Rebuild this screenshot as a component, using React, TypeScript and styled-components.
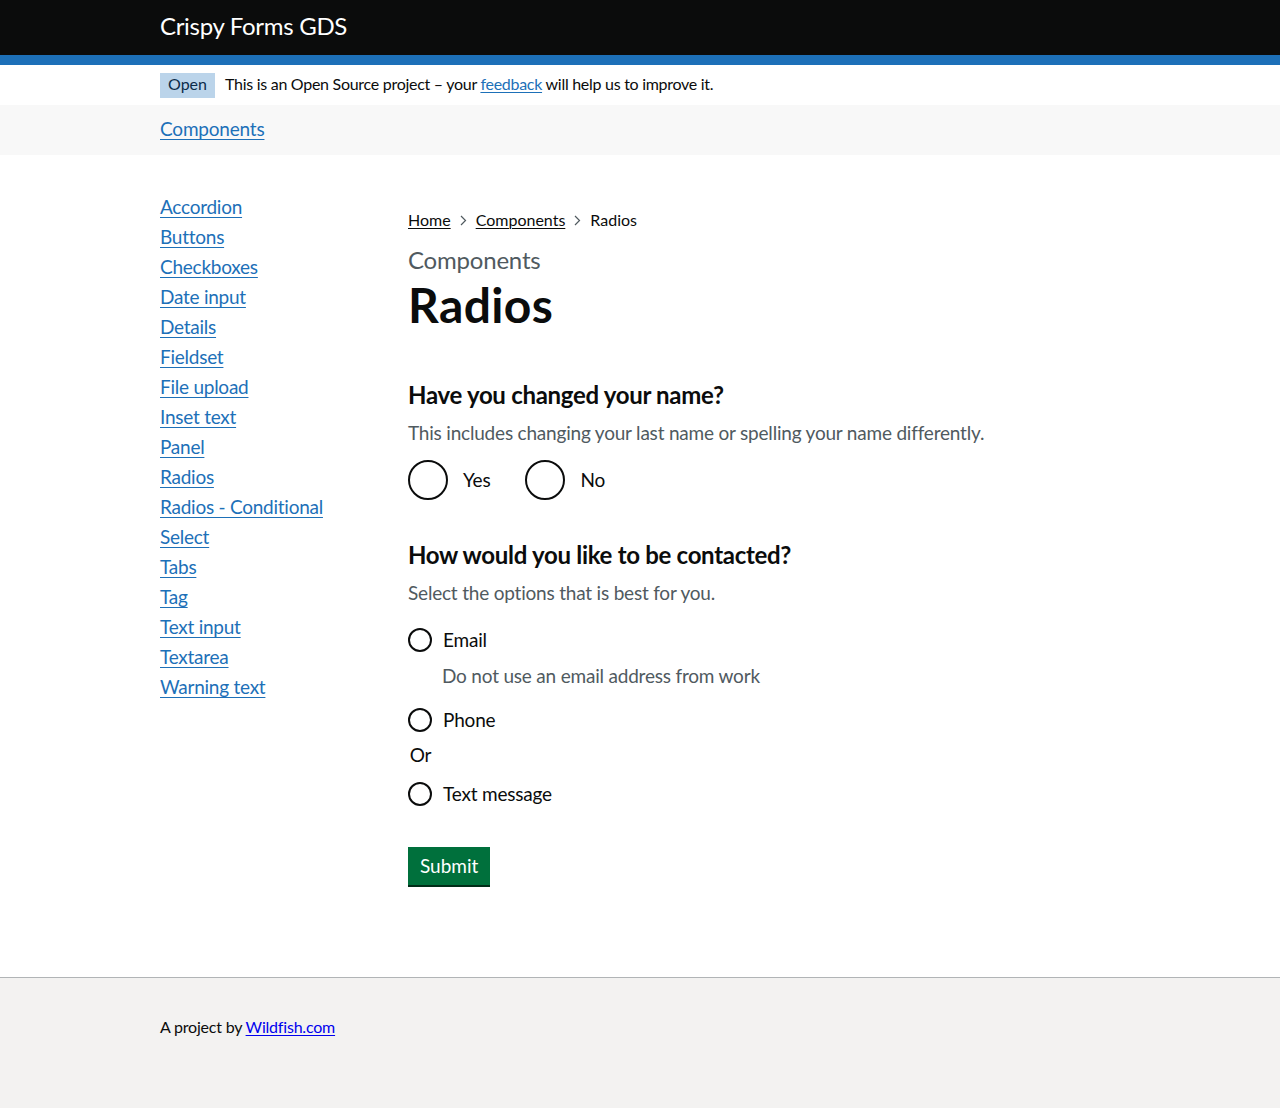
import React from "react";
import styled, { createGlobalStyle } from "styled-components";

const FONT = `Lato, "Liberation Sans", Arial, sans-serif`;

const GlobalStyle = createGlobalStyle`
  html, body { margin: 0; padding: 0; background: #ffffff; }
  body {
    font-family: ${FONT};
    color: #0b0c0c;
    letter-spacing: -0.2px;
    -webkit-font-smoothing: antialiased;
  }
  * { box-sizing: border-box; }
`;

const Page = styled.div`
  display: flex;
  flex-direction: column;
  min-height: 1108px;
`;

const Container = styled.div`
  width: 960px;
  margin: 0 auto;
`;

const Header = styled.header`
  background: #0b0c0c;
  border-bottom: 10px solid #1d70b8;
`;

const HeaderInner = styled(Container)`
  height: 55px;
  display: flex;
  align-items: center;
`;

const ServiceName = styled.span`
  color: #ffffff;
  font-size: 24px;
  line-height: 30px;
  letter-spacing: -0.3px;
  padding-bottom: 3px;
`;

const PhaseBanner = styled.div`
  padding: 8px 0 7px;
`;

const PhaseInner = styled(Container)`
  display: flex;
  align-items: center;
  font-size: 16px;
  line-height: 20px;
  letter-spacing: -0.28px;
`;

const PhaseText = styled.span`
  padding-bottom: 3px;
`;

const Tag = styled.strong`
  display: inline-block;
  background: #bbd4ea;
  color: #0c2d4a;
  font-weight: 400;
  font-size: 16px;
  line-height: 20px;
  letter-spacing: 0;
  padding: 1px 8px 4px;
  margin-right: 10px;
`;

const Link = styled.a<{ $black?: boolean; $visited?: boolean }>`
  color: ${(p) => (p.$black ? "#0b0c0c" : p.$visited ? "#0000ee" : "#1d70b8")};
  text-decoration: underline;
  text-decoration-thickness: 1px;
  text-underline-offset: 0.15em;
`;

const NavBar = styled.nav`
  background: #f8f8f8;
  height: 50px;
`;

const NavInner = styled(Container)`
  height: 50px;
  display: flex;
  align-items: center;
  font-size: 19px;
  line-height: 25px;
  padding-bottom: 3px;
`;

const Main = styled(Container)`
  display: grid;
  grid-template-columns: 248px 1fr;
  padding-top: 39px;
  padding-bottom: 90px;
  flex: 1;
`;

const SideList = styled.ul`
  list-style: none;
  margin: 0;
  padding: 0;
  font-size: 19px;
  line-height: 25px;
  letter-spacing: -0.25px;
`;

const SideItem = styled.li`
  margin-bottom: 5px;
`;

const Content = styled.div`
  padding-top: 16px;
`;

const Breadcrumbs = styled.ol`
  list-style: none;
  margin: 0 0 15px;
  padding: 0;
  display: flex;
  align-items: center;
  font-size: 16px;
  line-height: 20px;
  letter-spacing: 0;
`;

const Crumb = styled.li`
  display: flex;
  align-items: center;
`;

const Chevron = styled.svg`
  width: 7px;
  height: 11px;
  margin: 1px 9px 0 9px;
  flex: none;
`;

const Caption = styled.span`
  display: block;
  color: #505a5f;
  font-size: 24px;
  line-height: 30px;
  margin-bottom: 5px;
`;

const H1 = styled.h1`
  margin: 0 0 50px;
  font-size: 48px;
  line-height: 50px;
  font-weight: 700;
  letter-spacing: 0.4px;
`;

const Fieldset = styled.fieldset<{ $gap: number }>`
  border: 0;
  margin: 0 0 ${(p) => p.$gap}px;
  padding: 0;
  min-width: 0;
`;

const Legend = styled.legend`
  padding: 0;
  margin: 0 0 10px;
  font-size: 24px;
  line-height: 30px;
  font-weight: 700;
  letter-spacing: -0.3px;
`;

const Hint = styled.div`
  color: #505a5f;
  font-size: 19px;
  line-height: 25px;
  margin-bottom: 15px;
`;

const InlineRadios = styled.div`
  display: flex;
  align-items: flex-start;
`;

const RadioItem = styled.label<{ $inline?: boolean }>`
  display: flex;
  align-items: flex-start;
  min-height: 40px;
  margin-right: ${(p) => (p.$inline ? "20px" : "0")};
  cursor: pointer;
`;

const Circle = styled.span<{ $small?: boolean }>`
  flex: none;
  width: ${(p) => (p.$small ? 24 : 40)}px;
  height: ${(p) => (p.$small ? 24 : 40)}px;
  margin: ${(p) => (p.$small ? "8px 10px 0 0" : "0 15px 0 0")};
  border: 2px solid #0b0c0c;
  border-radius: 50%;
  background: #ffffff;
`;

const RadioLabel = styled.span<{ $small?: boolean }>`
  font-size: 19px;
  line-height: 25px;
  padding: 7px 15px 6px 0;
  padding-left: ${(p) => (p.$small ? "1px" : "0")};
`;

const StackRadios = styled.div`
  display: flex;
  flex-direction: column;
`;

const RadioGroup = styled.div`
  display: flex;
  flex-direction: column;
`;

const ItemHint = styled.div`
  color: #505a5f;
  font-size: 19px;
  line-height: 25px;
  padding-left: 34px;
  margin: 3px 0 12px;
`;

const Divider = styled.div`
  width: 24px;
  text-align: center;
  font-size: 19px;
  line-height: 25px;
  margin: 2px 0 7px 0;
  padding-left: 1px;
`;

const Button = styled.button`
  font-family: ${FONT};
  font-size: 19px;
  line-height: 19px;
  color: #ffffff;
  background: #00703c;
  border: 2px solid transparent;
  border-radius: 0;
  box-shadow: 0 2px 0 #002d18;
  padding: 7px 10px 8px;
  margin: 3px 0 0;
  cursor: pointer;
  align-self: flex-start;
`;

const Footer = styled.footer`
  background: #f3f2f1;
  border-top: 1px solid #b1b4b6;
  padding: 39px 0 71px;
`;

const FooterInner = styled(Container)`
  font-size: 16px;
  line-height: 20px;
`;

const sideLinks = [
  "Accordion",
  "Buttons",
  "Checkboxes",
  "Date input",
  "Details",
  "Fieldset",
  "File upload",
  "Inset text",
  "Panel",
  "Radios",
  "Radios - Conditional",
  "Select",
  "Tabs",
  "Tag",
  "Text input",
  "Textarea",
  "Warning text",
];

const ChevronIcon = () => (
  <Chevron viewBox="0 0 7 11" aria-hidden="true">
    <path d="M1 1 L5.5 5.5 L1 10" fill="none" stroke="#505a5f" strokeWidth="1.2" />
  </Chevron>
);

export default function App() {
  return (
    <Page>
      <GlobalStyle />
      <Header>
        <HeaderInner>
          <ServiceName>Crispy Forms GDS</ServiceName>
        </HeaderInner>
      </Header>
      <PhaseBanner>
        <PhaseInner>
          <Tag>Open</Tag>
          <PhaseText>
            This is an Open Source project – your <Link href="#">feedback</Link> will help us to improve it.
          </PhaseText>
        </PhaseInner>
      </PhaseBanner>
      <NavBar>
        <NavInner>
          <Link href="#">Components</Link>
        </NavInner>
      </NavBar>
      <Main as="main">
        <SideList>
          {sideLinks.map((l) => (
            <SideItem key={l}>
              <Link href="#">{l}</Link>
            </SideItem>
          ))}
        </SideList>
        <Content>
          <Breadcrumbs>
            <Crumb>
              <Link $black href="#">Home</Link>
            </Crumb>
            <ChevronIcon />
            <Crumb>
              <Link $black href="#">Components</Link>
            </Crumb>
            <ChevronIcon />
            <Crumb>Radios</Crumb>
          </Breadcrumbs>
          <Caption>Components</Caption>
          <H1>Radios</H1>
          <form onSubmit={(e) => e.preventDefault()}>
            <RadioGroup>
              <Fieldset $gap={40}>
                <Legend>Have you changed your name?</Legend>
                <Hint>This includes changing your last name or spelling your name differently.</Hint>
                <InlineRadios>
                  <RadioItem $inline>
                    <Circle />
                    <RadioLabel>Yes</RadioLabel>
                  </RadioItem>
                  <RadioItem $inline>
                    <Circle />
                    <RadioLabel>No</RadioLabel>
                  </RadioItem>
                </InlineRadios>
              </Fieldset>
              <Fieldset $gap={30}>
                <Legend>How would you like to be contacted?</Legend>
                <Hint>Select the options that is best for you.</Hint>
                <StackRadios>
                  <RadioItem>
                    <Circle $small />
                    <RadioLabel $small>Email</RadioLabel>
                  </RadioItem>
                  <ItemHint>Do not use an email address from work</ItemHint>
                  <RadioItem>
                    <Circle $small />
                    <RadioLabel $small>Phone</RadioLabel>
                  </RadioItem>
                  <Divider>Or</Divider>
                  <RadioItem>
                    <Circle $small />
                    <RadioLabel $small>Text message</RadioLabel>
                  </RadioItem>
                </StackRadios>
              </Fieldset>
              <Button type="submit">Submit</Button>
            </RadioGroup>
          </form>
        </Content>
      </Main>
      <Footer>
        <FooterInner>
          A project by <Link $visited href="#">Wildfish.com</Link>
        </FooterInner>
      </Footer>
    </Page>
  );
}
